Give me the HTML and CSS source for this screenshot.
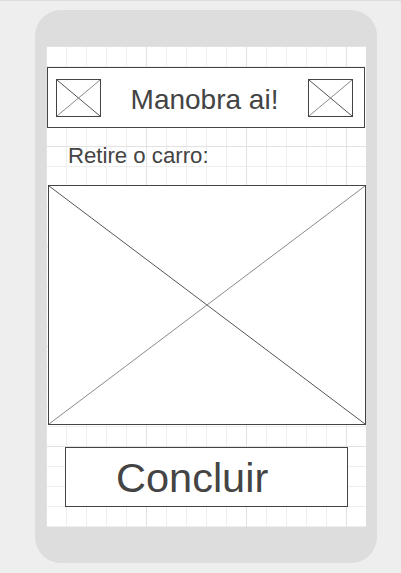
FILE: index.html
```
<html>
  <head>
    <title>Manobra ai!</title>
    <meta name="viewport" content="width=device-width, initial-scale=1">
    <link rel="stylesheet" href="styles.css">
  </head>
  <body>
    <div class="phone">
      <div class="screen">
        <!-- top bar -->
        <div class="header">
          <div class="placeholder icon">
            <svg viewBox="0 0 100 100" preserveAspectRatio="none">
              <line class="dark" x1="0" y1="0" x2="100" y2="100" />
              <line class="light" x1="0" y1="100" x2="100" y2="0" />
            </svg>
          </div>
          <h1 class="title">Manobra ai!</h1>
          <div class="placeholder icon">
            <svg viewBox="0 0 100 100" preserveAspectRatio="none">
              <line class="dark" x1="0" y1="0" x2="100" y2="100" />
              <line class="light" x1="0" y1="100" x2="100" y2="0" />
            </svg>
          </div>
        </div>

        <p class="label">Retire o carro:</p>

        <!-- car picture -->
        <div class="placeholder photo">
          <svg viewBox="0 0 100 100" preserveAspectRatio="none">
            <line class="dark" x1="0" y1="0" x2="100" y2="100" />
            <line class="light" x1="0" y1="100" x2="100" y2="0" />
          </svg>
        </div>

        <button class="done">Concluir</button>
      </div>
    </div>
  </body>
</html>
```
FILE: styles.css
```
body {
  margin: 0;
  background-color: #eeeeee;
  border-top: 1px solid #dcdcdc;
  font-family: "Liberation Sans", Arial, sans-serif;
  color: #444;
}

.phone {
  width: 342px;
  height: 553px;
  margin: 9px 0 0 35px;
  padding: 36px 11px;
  box-sizing: border-box;
  background-color: #dddddd;
  border-radius: 26px;
}

/* white screen with the sketch grid */
.screen {
  width: 320px;
  height: 481px;
  display: flex;
  flex-direction: column;
  align-items: flex-start;
  background-color: #fff;
  background-image:
    linear-gradient(to right, #e2e2e2 1px, transparent 1px),
    linear-gradient(to bottom, #e2e2e2 1px, transparent 1px),
    linear-gradient(to right, #eeeeee 1px, transparent 1px),
    linear-gradient(to bottom, #eeeeee 1px, transparent 1px);
  background-size: 100px 100px, 100px 100px, 20px 20px, 20px 20px;
}

.placeholder {
  border: 1px solid #444;
  background: #fff;
  box-sizing: border-box;
}

.placeholder svg {
  display: block;
  width: 100%;
  height: 100%;
}

.placeholder line {
  stroke-width: 1;
  vector-effect: non-scaling-stroke;
}

.placeholder .dark {
  stroke: #555;
}

.placeholder .light {
  stroke: #8a8a8a;
}

/* top bar */
.header {
  width: 318px;
  height: 61px;
  margin: 21px 0 0 1px;
  padding: 0 11px 0 8px;
  box-sizing: border-box;
  border: 1px solid #444;
  background: #fff;
  display: flex;
  align-items: center;
}

.icon {
  width: 45px;
  height: 38px;
  flex-shrink: 0;
  margin-top: 1px;
}

.title {
  flex: 1;
  margin: 0;
  padding-top: 4px;
  text-align: center;
  font-size: 28px;
  font-weight: normal;
  line-height: 32px;
}

.label {
  margin: 15px 0 0 0;
  padding-left: 22px;
  font-size: 22.2px;
  line-height: 26px;
}

.photo {
  width: 318px;
  height: 240px;
  margin: 16px 0 0 2px;
}

.done {
  width: 283px;
  height: 60px;
  margin: 22px 0 0 19px;
  padding: 2px 0 0 50px;
  box-sizing: border-box;
  border: 1px solid #444;
  background: #fff;
  color: #444;
  font-family: "Liberation Sans", Arial, sans-serif;
  font-size: 41.5px;
  line-height: 56px;
  text-align: left;
}
```
